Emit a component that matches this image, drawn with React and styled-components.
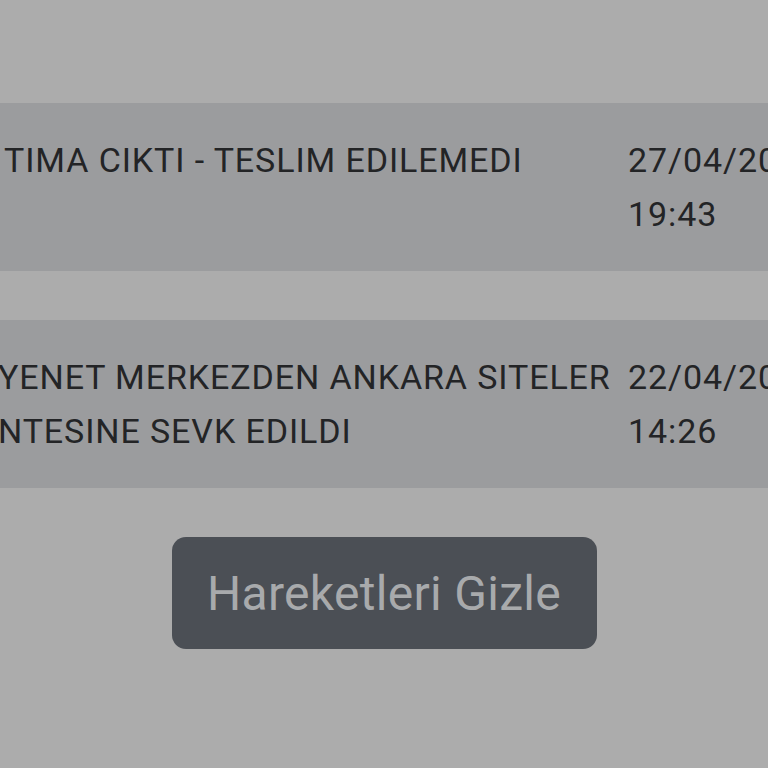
import React from "react";
import styled, { createGlobalStyle } from "styled-components";

const GlobalStyle = createGlobalStyle`
  html, body {
    margin: 0;
    padding: 0;
    background-color: #acacac;
  }
`;

const StyledPage = styled.main`
  width: 100%;
  min-height: 768px;
  overflow: hidden;
  background-color: #acacac;
  font-family: Roboto, "Liberation Sans", sans-serif;
  display: flex;
  flex-direction: column;
  align-items: center;
  padding-top: 103px;
  box-sizing: border-box;
`;

const StyledList = styled.section`
  align-self: stretch;
  display: flex;
  flex-direction: column;
  gap: 49px;
`;

const StyledCard = styled.article`
  display: flex;
  width: calc(100% + 200px);
  padding: 30px 0;
  background-color: #9b9c9e;
  color: #232426;
  font-size: 34px;
  letter-spacing: 0.9px;
  line-height: 54px;
`;

const StyledDescription = styled.p`
  margin: 0 0 0 ${({ $shift }) => $shift}px;
  width: ${({ $shift }) => 628 - $shift}px;
  flex: none;
`;

const StyledDate = styled.div`
  display: flex;
  flex-direction: column;
  white-space: nowrap;
`;

const StyledButton = styled.button`
  margin-top: 49px;
  width: 425px;
  height: 112px;
  border: none;
  border-radius: 14px;
  background-color: #4b4f55;
  color: #a8aaac;
  font-family: Roboto, "Liberation Sans", sans-serif;
  font-size: 48px;
  letter-spacing: 0.3px;
  cursor: pointer;
`;

/* Shipment movements (left side of the text is cut off in the view) */
const movements = [
  {
    text: "TIMA CIKTI - TESLIM EDILEMEDI",
    date: "27/04/2023",
    time: "19:43",
    shift: 4,
  },
  {
    text: "YENET MERKEZDEN ANKARA SITELER NTESINE SEVK EDILDI",
    date: "22/04/2023",
    time: "14:26",
    shift: -2,
  },
];

const App = () => {
  return (
    <>
      <GlobalStyle />
      <StyledPage>
        <StyledList>
          {movements.map((item, idx) => (
            <StyledCard key={idx}>
              <StyledDescription $shift={item.shift}>{item.text}</StyledDescription>
              <StyledDate>
                <span>{item.date}</span>
                <span>{item.time}</span>
              </StyledDate>
            </StyledCard>
          ))}
        </StyledList>
        <StyledButton>Hareketleri Gizle</StyledButton>
      </StyledPage>
    </>
  );
};

export default App;
